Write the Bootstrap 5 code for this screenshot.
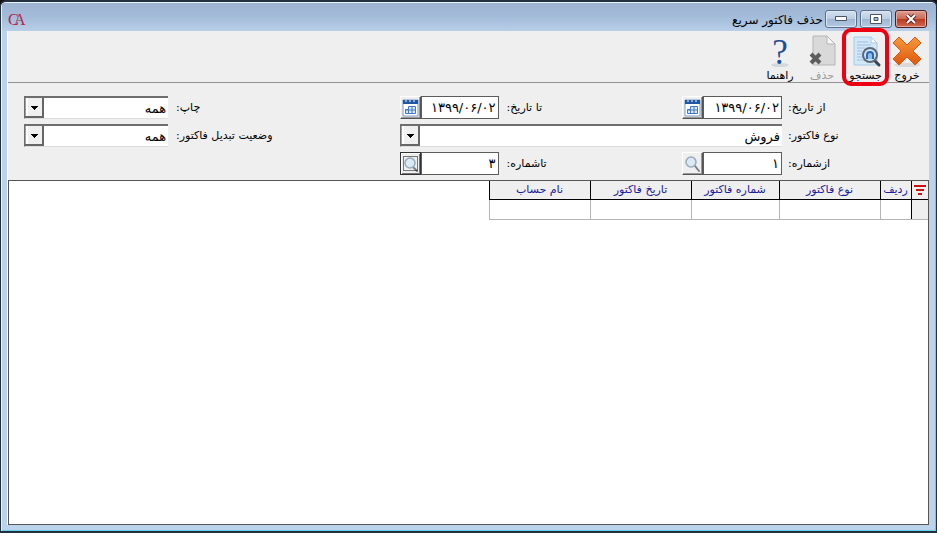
<!DOCTYPE html>
<html lang="fa" dir="rtl">
<head>
<meta charset="utf-8">
<meta name="viewport" content="width=device-width, initial-scale=1">
<title>حذف فاکتور سریع</title>
<link href="https://cdn.jsdelivr.net/npm/bootstrap@5.3.0/dist/css/bootstrap.min.css" rel="stylesheet">
<style>
body{font-family:"DejaVu Sans",sans-serif;font-size:11px;line-height:16px;color:#000;background:#111}
.win{min-height:100vh;background:#bcd3ec;border:1px solid #23303f;border-width:2px 1px 2px 1px;border-radius:6px 6px 0 0;padding:0 7px 6px;box-shadow:inset 1px 1px 0 #e9f2fb,inset -1px -1px 0 #5fd0e6}
.titlebar{height:28px;background:linear-gradient(#9db5d3,#a3bcd9 50%,#b9cfe8);margin:1px -6px 0;padding:4px 8px 0 6px}
.titlebar h1{font-size:12px;line-height:18px;padding:2px 2px 0 0}
.wbtns{gap:3px}
.wbtn{width:32px;height:18px;border:1px solid #5a6e8a;border-radius:3px;background:linear-gradient(#d3e0ef,#bccde2 48%,#9fb6d2 50%,#b4c9e2);box-shadow:inset 0 0 0 1px #dbe7f4}
.wclose{border-color:#4a2020;background:linear-gradient(#dd9d90,#cf6a57 48%,#b8391f 50%,#cf6b50);box-shadow:inset 0 0 0 1px #e5ab9f}
.client{background:#efefef;border-left:1px solid #fff;margin-left:-1px}
.tools{height:52px;border-bottom:1px solid #919191;padding:3px 1px 0}
.tool{width:42px;border:0;background:none;font-size:11px;line-height:13px;color:#000}
.tool:disabled{color:#9b9b9b}
.tool-on{width:47px;height:58px;border:4px solid #ed0012;border-radius:9px;margin:-6px -3px 0 -1px;padding-top:2px;position:relative}
.filters{display:grid;grid-template-columns:141px 100px 171fr 99px 219fr 144px;column-gap:6px;row-gap:5px;padding:13px 0 5px 16px;align-items:center}
.filters label{text-align:left;padding-left:2px;white-space:nowrap}
.filters .lab-first{padding-left:0}
.span-type{grid-column:span 3}
.field{height:23px}
.field input,.filters select{font-family:inherit;font-size:13px;line-height:18px;color:#000;background-color:#fff;border-radius:0;min-width:0}
.field input{border:1px solid #5c5c5c;padding:0 2px 0 1px;text-align:right;width:78px;flex:1 1 auto}
.filters select{height:23px;width:100%;appearance:none;border:solid #6e6e6e;border-width:2px 0 1px 1px;border-bottom-color:#ddd;padding:2px 2px 0 22px;background-repeat:no-repeat;background-position:left top;background-image:url("data:image/svg+xml,%3Csvg xmlns='http://www.w3.org/2000/svg' width='19' height='20'%3E%3Cpath fill='%23f0f0f0' d='M0 0h19v20H0z'/%3E%3Cpath fill='%23a5a864' d='M0 0h1v20H0z'/%3E%3Cpath fill='%23fff' d='M1 0h2v19H1z'/%3E%3Cpath fill='%23666' d='M17 0h2v20H0v-2h17z'/%3E%3Cpath d='M6 8h7v1h-1v1h-1v1h-1v1H9v-1H8v-1H7V9H6z'/%3E%3C/svg%3E")}
.pick{width:21px;height:23px;border:1px solid;border-color:#fff #555 #555 #fff;background:#efefef;box-shadow:inset -1px -1px 0 #999}
.pick-on{border-color:#333;box-shadow:inset 1px 1px 0 #fff,inset -1px -1px 0 #777}
.results{background:#fff;border:1px solid #555}
.grid-table{table-layout:fixed;width:439px;border-collapse:collapse}
.grid-table th{height:18px;background:#efefef;color:#1a1a9c;font-weight:400;text-align:center;border:1px solid #000;border-top:0;padding:0;line-height:16px;white-space:nowrap}
.grid-table td{height:20px;border:1px solid #b5b5b5;padding:0}
.grid-table tr>:first-child{border-right:0}
.grid-table td:first-child{background:#efefef;border-left-color:#000}
svg{display:block}
</style>
<script src="https://cdn.jsdelivr.net/npm/bootstrap@5.3.0/dist/js/bootstrap.bundle.min.js"></script>
</head>
<body>
<div class="win d-flex flex-column">
  <header class="titlebar d-flex align-items-center flex-shrink-0">
    <div class="wbtns d-flex">
      <button class="wbtn wclose p-0 d-flex align-items-center justify-content-center" aria-label="بستن"><svg width="12" height="10" viewBox="0 0 12 10"><path d="M2 1l8 8M10 1L2 9" stroke="#5b2a2a" stroke-width="4"/><path d="M2 1l8 8M10 1L2 9" stroke="#fff" stroke-width="2"/></svg></button>
      <button class="wbtn p-0 d-flex align-items-center justify-content-center" aria-label="بزرگ کردن"><svg width="12" height="10" viewBox="0 0 12 10"><path d="M.5.5h11v9H.5z" fill="#fff" stroke="#4b5566"/><path d="M4 3.500h4v3H4z" fill="#9fb6d2" stroke="#4b5566"/></svg></button>
      <button class="wbtn p-0 d-flex align-items-center justify-content-center" aria-label="کوچک کردن"><svg width="12" height="6" viewBox="0 0 12 6"><path d="M.5.5h11v4H.5z" fill="#fff" stroke="#4b5566"/></svg></button>
    </div>
    <h1 class="fw-normal mb-0 ms-auto">حذف فاکتور سریع</h1>
    <svg width="18" height="18" viewBox="0 0 18 18" font-family="Liberation Serif,serif" font-size="16" fill="#b3254c" direction="ltr"><text x="0" y="15">C</text><text x="6" y="15">A</text></svg>
  </header>

  <main class="client flex-grow-1 d-flex flex-column">
    <nav class="tools d-flex align-items-start flex-shrink-0">
      <button class="tool p-0 d-flex flex-column align-items-center"><svg width="32" height="35" viewBox="0 0 32 35"><defs><linearGradient id="og" x2="0" y2="1"><stop stop-color="#f59a3c"/><stop offset="1" stop-color="#e0560c"/></linearGradient></defs><ellipse cx="16" cy="31" rx="13" ry="2" fill="#d8d8d8"/><path d="M8 3l8 8 8-8 6 6-8 8 8 8-6 6-8-8-8 8-6-6 8-8-8-8z" fill="url(#og)" stroke="#d9560f" stroke-linejoin="round"/></svg>خروج</button>
      <button class="tool tool-on pb-0 px-0 d-flex flex-column align-items-center"><svg width="32" height="35" viewBox="0 0 32 35"><path d="M4 3h17l6 6v22H4z" fill="#d3e7f7" stroke="#a9c9e4"/><path d="M21 3v6h6z" fill="#f3f9fe" stroke="#a9c9e4"/><path d="M7 8h11M7 11h14M7 14h8M7 17h5M7 20h5M7 23h6M7 26h8" stroke="#9dc0dd"/><path d="M25 27l4 4" stroke="#3a434e" stroke-width="3" stroke-linecap="round"/><circle cx="20" cy="21" r="7" fill="#c8e4f7" stroke="#5b6878" stroke-width="2"/><path d="M17 25v-4a3 3 0 016 0v4" fill="#8fbfe8" stroke="#2f66b4" stroke-width="2"/></svg>جستجو</button>
      <button class="tool p-0 d-flex flex-column align-items-center" disabled><svg width="32" height="35" viewBox="0 0 32 35"><path d="M7 2h14l8 8v21H7z" fill="#d9d9d9" stroke="#b5b5b5"/><path d="M21 2v8h8z" fill="#f6f6f6" stroke="#b5b5b5"/><path d="M5 20l9 9M14 20l-9 9" stroke="#5d5d5d" stroke-width="4"/></svg>حذف</button>
      <button class="tool p-0 d-flex flex-column align-items-center"><svg class="overflow-visible" width="32" height="35" viewBox="0 0 32 35"><ellipse cx="16" cy="31" rx="9" ry="2" fill="#d3d7de"/><text x="16" y="30" text-anchor="middle" font-family="Liberation Serif,serif" font-size="35" fill="#1d4f98">?</text></svg>راهنما</button>
    </nav>

    <form class="filters flex-shrink-0">
      <label class="lab-first" for="fromDate">از تاریخ:</label>
      <div class="field d-flex"><input id="fromDate" dir="ltr" value="۱۳۹۹/۰۶/۰۲"><button type="button" class="pick p-0" aria-label="تقویم"><svg class="mx-auto" width="17" height="18" viewBox="0 0 17 18"><path d="M1 1h15v16H1z" fill="#fff" stroke="#7a9cc6"/><path d="M1 1h15v4H1z" fill="#1f57a4"/><path d="M3 2h2M7 2h2M11 2h2" stroke="#fff"/><path d="M6.500 7.500h7v7h-10v-4h3z M3 11h11M6.500 11v4M10 7v8" fill="#d8e9fb" stroke="#4079c0"/></svg></button></div>
      <label for="toDate">تا تاریخ:</label>
      <div class="field d-flex"><input id="toDate" dir="ltr" value="۱۳۹۹/۰۶/۰۲"><button type="button" class="pick p-0" aria-label="تقویم"><svg class="mx-auto" width="17" height="18" viewBox="0 0 17 18"><path d="M1 1h15v16H1z" fill="#fff" stroke="#7a9cc6"/><path d="M1 1h15v4H1z" fill="#1f57a4"/><path d="M3 2h2M7 2h2M11 2h2" stroke="#fff"/><path d="M6.500 7.500h7v7h-10v-4h3z M3 11h11M6.500 11v4M10 7v8" fill="#d8e9fb" stroke="#4079c0"/></svg></button></div>
      <label for="print">چاپ:</label>
      <select id="print"><option>همه</option></select>

      <label class="lab-first" for="kind">نوع فاکتور:</label>
      <select id="kind" class="span-type"><option>فروش</option></select>
      <label for="state">وضعیت تبدیل فاکتور:</label>
      <select id="state"><option>همه</option></select>

      <label class="lab-first" for="fromNo">ازشماره:</label>
      <div class="field d-flex"><input id="fromNo" dir="ltr" value="۱"><button type="button" class="pick p-0" aria-label="جستجو"><svg class="mx-auto" width="17" height="18" viewBox="0 0 17 18"><path d="M11 11l4 5" stroke="#77808c" stroke-width="2" stroke-linecap="round"/><circle cx="7" cy="7" r="5" fill="#dbe9f7" stroke="#9aa9ba" stroke-width="1.500"/></svg></button></div>
      <label for="toNo">تاشماره:</label>
      <div class="field d-flex"><input id="toNo" dir="ltr" value="۳"><button type="button" class="pick pick-on p-0" aria-label="جستجو"><svg class="mx-auto" width="17" height="18" viewBox="0 0 17 18"><path d="M11 12l4 4" stroke="#77808c" stroke-width="2" stroke-linecap="round"/><circle cx="8" cy="8" r="5" fill="#dbe9f7" stroke="#9aa9ba" stroke-width="1.500"/><path d="M1.500 1.500h14v14h-14z" fill="none" stroke="#000" stroke-dasharray="1 1"/></svg></button></div>
    </form>

    <section class="results flex-grow-1">
      <table class="grid-table">
        <colgroup><col style="width:17px"><col style="width:31px"><col style="width:101px"><col style="width:88px"><col style="width:101px"><col style="width:101px"></colgroup>
        <thead><tr><th aria-label="فیلتر"><svg class="mx-auto" width="12" height="10" viewBox="0 0 12 10"><path d="M0 0h12v2H0zM2 4h8v2H2zM4 8h4v2H4z" fill="#cc1111"/></svg></th><th>ردیف</th><th>نوع فاکتور</th><th>شماره فاکتور</th><th>تاریخ فاکتور</th><th>نام حساب</th></tr></thead>
        <tbody><tr><td></td><td></td><td></td><td></td><td></td><td></td></tr></tbody>
      </table>
    </section>
  </main>
</div>
</body>
</html>
